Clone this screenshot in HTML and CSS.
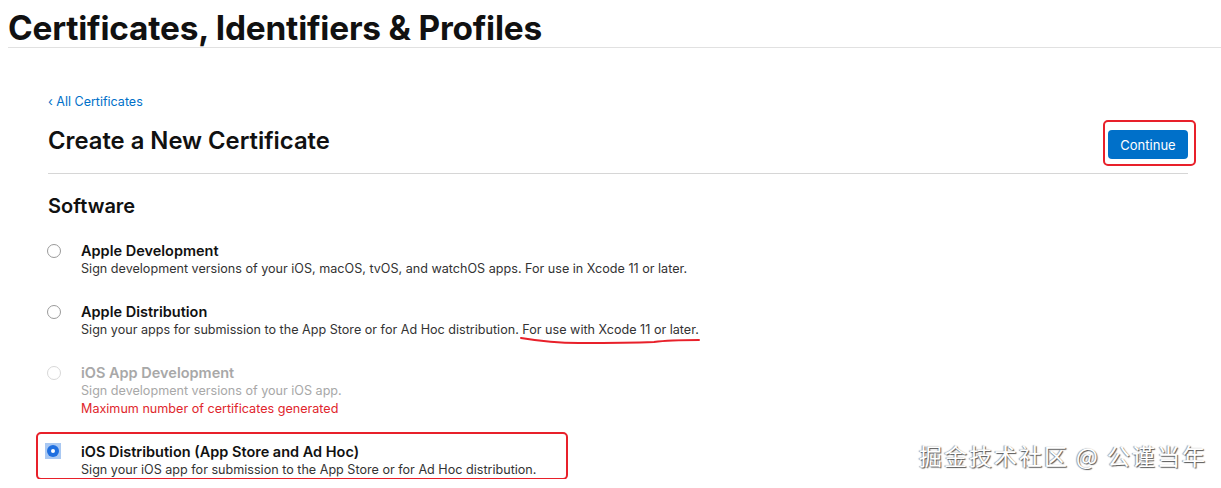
FILE: index.html
```html
<!DOCTYPE html>
<html lang="en">
<head>
    <meta charset="UTF-8">
    <meta name="viewport" content="width=device-width, initial-scale=1.0">
    <title>Certificates, Identifiers &amp; Profiles</title>
    <link rel="stylesheet" href="styles.css">
</head>
<body>
    <header class="top">
        <h1>Certificates, Identifiers &amp; Profiles</h1>
    </header>

    <main class="main">
        <a class="back" href="#">&lsaquo; All Certificates</a>

        <div class="page-head">
            <h2>Create a New Certificate</h2>
            <div class="mark-box">
                <button type="button" class="btn">Continue</button>
            </div>
        </div>

        <h3>Software</h3>

        <form class="options">
            <label class="option">
                <span class="radio"></span>
                <span class="text">
                    <span class="title">Apple Development</span>
                    <span class="desc">Sign development versions of your iOS, macOS, tvOS, and watchOS apps. For use in Xcode 11 or later.</span>
                </span>
            </label>

            <label class="option">
                <span class="radio"></span>
                <span class="text">
                    <span class="title">Apple Distribution</span>
                    <span class="desc">Sign your apps for submission to the App Store or for Ad Hoc distribution. <span class="scribble">For use with Xcode 11 or later.<svg class="scribble-line" viewBox="0 0 182 10" preserveAspectRatio="none"><path d="M2 2 C 20 5, 40 7, 60 7 C 90 7, 110 7, 135 6 C 150 4, 165 4, 180 4" fill="none" stroke="#e8202a" stroke-width="2" stroke-linecap="round"/></svg></span></span>
                </span>
            </label>

            <label class="option disabled">
                <span class="radio"></span>
                <span class="text">
                    <span class="title">iOS App Development</span>
                    <span class="desc">Sign development versions of your iOS app.</span>
                    <span class="error">Maximum number of certificates generated</span>
                </span>
            </label>

            <label class="option picked">
                <span class="radio on"><span class="dot"></span></span>
                <span class="text">
                    <span class="title">iOS Distribution (App Store and Ad Hoc)</span>
                    <span class="desc">Sign your iOS app for submission to the App Store or for Ad Hoc distribution.</span>
                </span>
            </label>
        </form>
    </main>

    <div class="watermark">掘金技术社区 @ 公谨当年</div>
</body>
</html>
```

FILE: styles.css
```css
body {
    margin: 0;
    font-family: Inter, "Noto Sans", sans-serif;
    color: #1d1d1f;
    background: #fff;
}
.top {
    margin-left: 8px;
    border-bottom: 1px solid #e1e1e1;
}
.top h1 {
    margin: 0;
    padding-top: 9px;
    font-size: 33.4px;
    line-height: 38px;
    font-weight: 700;
    letter-spacing: -0.2px;
    color: #111;
}
.main {
    padding: 46px 33px 0 48px;
}
.back {
    display: block;
    font-size: 12.5px;
    line-height: 16px;
    color: #0070c9;
    text-decoration: none;
}
.page-head {
    display: flex;
    align-items: flex-start;
    justify-content: space-between;
    margin-top: 16px;
    padding-bottom: 14px;
    border-bottom: 1px solid #d6d6d6;
}
.page-head h2 {
    margin: 0;
    font-size: 23.8px;
    line-height: 29px;
    font-weight: 600;
    color: #111;
}
.mark-box {
    position: relative;
    margin-top: 4px;
}
.mark-box::before {
    content: "";
    position: absolute;
    left: -5px;
    top: -10px;
    right: -8px;
    bottom: -7px;
    border: 2px solid #e8202a;
    border-radius: 5px;
}
.btn {
    display: block;
    width: 80px;
    height: 29px;
    border: none;
    border-radius: 4px;
    background: #0070c9;
    color: #fff;
    font-family: Inter, sans-serif;
    font-size: 13px;
    cursor: pointer;
}
h3 {
    margin: 20px 0 0;
    font-size: 20px;
    line-height: 24px;
    font-weight: 600;
    color: #111;
}
.options {
    display: flex;
    flex-direction: column;
    gap: 24px;
    margin-top: 23px;
}
.option {
    display: flex;
    gap: 20px;
}
.radio {
    flex: none;
    width: 12px;
    height: 12px;
    margin: 3px 0 0 -1px;
    border: 1px solid #9a9a9a;
    border-radius: 50%;
    background: #fff;
}
.text {
    display: flex;
    flex-direction: column;
}
.title {
    font-size: 14.5px;
    line-height: 19px;
    font-weight: 600;
    color: #111;
}
.desc, .error {
    font-size: 12.6px;
    line-height: 18px;
    color: #333;
}
.scribble {
    position: relative;
}
.scribble-line {
    position: absolute;
    left: -3px;
    top: 14px;
    width: 182px;
    height: 10px;
}
.disabled .radio {
    border-color: #d8d8d8;
}
.disabled .title, .disabled .desc {
    color: #a8a8a8;
}
.error {
    color: #e0262d;
}
.picked {
    position: relative;
}
.picked::before {
    content: "";
    position: absolute;
    left: -12px;
    top: -10px;
    width: 528px;
    height: 44px;
    border: 2px solid #e8202a;
    border-radius: 5px;
}
.radio.on {
    width: 16px;
    height: 16px;
    margin: 1px 0 0 -3px;
    border: none;
    border-radius: 0;
    background: #a9c8f2;
    display: flex;
    align-items: center;
    justify-content: center;
    position: relative;
}
.radio.on::before {
    content: "";
    width: 12px;
    height: 12px;
    border-radius: 50%;
    background: #1f6fe0;
    position: absolute;
}
.dot {
    width: 4px;
    height: 4px;
    border-radius: 50%;
    background: #fff;
    position: relative;
}
.watermark {
    position: absolute;
    right: 14px;
    top: 439px;
    font-family: "Noto Sans CJK SC", sans-serif;
    font-size: 23px;
    line-height: 32px;
    color: #fff;
    text-shadow: 1px 1px 1px #555, -1px 0 1px #999;
    letter-spacing: 2px;
}
```
